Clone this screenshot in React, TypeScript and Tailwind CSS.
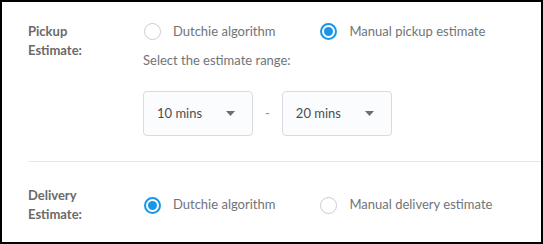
import React from "react";

const font = { fontFamily: "Lato, 'Open Sans', sans-serif" };

const Radio = ({ checked, label }: { checked: boolean; label: string }) => (
  <label className="flex items-center gap-[12px] text-[13px] text-[#707478]">
    {checked ? (
      <span className="flex h-[17px] w-[17px] items-center justify-center rounded-full border-2 border-[#1a96e8]">
        <span className="h-[9px] w-[9px] rounded-full bg-[#1a96e8]" />
      </span>
    ) : (
      <span className="h-[17px] w-[17px] rounded-full border border-[#c8ccd0]" />
    )}
    {label}
  </label>
);

const Select = ({ value }: { value: string }) => (
  <div className="flex h-[45px] w-[110px] items-center justify-between rounded-[4px] border border-[#d8dce0] bg-[#fbfcfd] pl-[13px] pr-[17px] text-[13px] text-[#4a4e52]">
    <span>{value}</span>
    <svg width="9" height="5" viewBox="0 0 9 5">
      <path d="M0 0h9L4.5 5z" fill="#6b6f73" />
    </svg>
  </div>
);

export default function App() {
  return (
    <div style={font} className="h-[244px] w-[543px] border-2 border-black bg-white">
      {/* Pickup */}
      <div className="flex pl-[26px] pt-[20px]">
        <div className="w-[115px] text-[13px] font-bold leading-[19px] text-[#6a6a6a]">
          Pickup
          <br />
          Estimate:
        </div>
        <div className="flex flex-col">
          <div className="flex gap-[45px] pl-px">
            <Radio checked={false} label="Dutchie algorithm" />
            <Radio checked label="Manual pickup estimate" />
          </div>
          <p className="mt-[9px] text-[13px] text-[#707478]">Select the estimate range:</p>
          <div className="mt-[21px] flex items-center gap-[12px]">
            <Select value="10 mins" />
            <span className="text-[13px] text-[#8a8e92]">-</span>
            <Select value="20 mins" />
          </div>
        </div>
      </div>

      <div className="ml-[26px] mt-[25px] h-px bg-[#e6e8ea]" />

      {/* Delivery */}
      <div className="flex pl-[26px] pt-[24px]">
        <div className="w-[115px] text-[13px] font-bold leading-[19px] text-[#6a6a6a]">
          Delivery
          <br />
          Estimate:
        </div>
        <div className="flex items-center gap-[45px] pl-px">
          <Radio checked label="Dutchie algorithm" />
          <Radio checked={false} label="Manual delivery estimate" />
        </div>
      </div>
    </div>
  );
}
